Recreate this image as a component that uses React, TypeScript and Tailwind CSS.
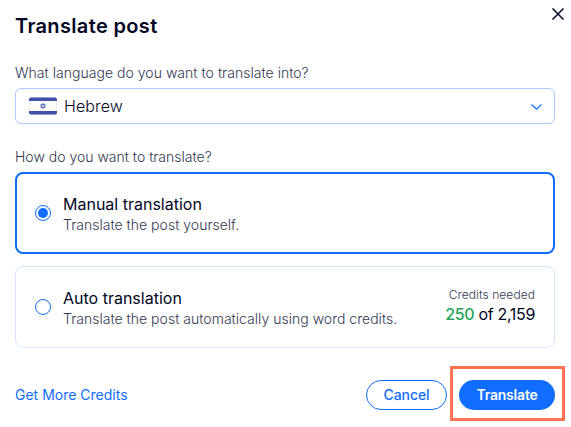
import React, { useState } from 'react';
import clsx from 'clsx';

const options = [
  { id: 'manual', title: 'Manual translation', text: 'Translate the post yourself.' },
  { id: 'auto', title: 'Auto translation', text: 'Translate the post automatically using word credits.' },
];

const IsraelFlag = () => (
  <svg width="28" height="18" viewBox="0 0 28 18" fill="none">
    <rect x="0.5" y="0.5" width="27" height="17" rx="2" fill="#fff" stroke="#e9ebf2" />
    <path d="M2 .5h24a2 2 0 0 1 2 2V4H0V2.500a2 2 0 0 1 2-2Z" fill="#414fa8" />
    <path d="M0 14h28v1.500a2 2 0 0 1-2 2H2a2 2 0 0 1-2-2Z" fill="#414fa8" />
    <path d="m14 6.300 2.300 4H11.700Z M14 11.700l-2.300-4h4.600Z" stroke="#4a5db8" strokeWidth="0.8" />
  </svg>
);

const Radio = ({ checked }: { checked: boolean }) => (
  <span className="flex h-4 w-4 shrink-0 items-center justify-center rounded-full border border-[#116dff]">
    {checked && <span className="h-2.5 w-2.5 rounded-full bg-[#116dff]" />}
  </span>
);

const App = () => {
  const [selected, setSelected] = useState('manual');

  return (
    <div className="h-[427px] w-[571px] overflow-hidden bg-white pl-[15px] pr-4 font-['Inter','Open_Sans',sans-serif] text-[#000624]">
      <header className="relative flex h-[63px] pt-[14px]">
        <h1 className="text-[20px] leading-6 font-semibold tracking-[0.35px] whitespace-nowrap">Translate post</h1>
        <button aria-label="Close" className="absolute top-2 -right-[9px]">
          <svg width="12" height="12" viewBox="0 0 12 12" fill="none" stroke="#000624" strokeWidth="1.500">
            <path d="m.5.5 11 11M11.500.5l-11 11" />
          </svg>
        </button>
      </header>

      <label className="flex h-[25px] text-[14px] leading-5 font-light tracking-[0.03px] text-[#333853]">
        <span className="whitespace-nowrap">What language do you want to translate into?</span>
      </label>
      <button className="flex h-9 w-full items-center rounded-md border border-[#a8caff] pr-3 pl-[13px]">
        <IsraelFlag />
        <span className="ml-[7px] text-[16px] font-light tracking-[0.1px] whitespace-nowrap">Hebrew</span>
        <svg className="mt-px ml-auto" width="11" height="6" viewBox="0 0 11 6" fill="none" stroke="#116dff" strokeWidth="1.200">
          <path d="m.5.5 5 4.700 5-4.700" />
        </svg>
      </button>

      <div className="flex h-12 pt-[23px] text-[14px] leading-5 font-light text-[#333853]">
        <span className="whitespace-nowrap">How do you want to translate?</span>
      </div>
      <div className="flex flex-col gap-3">
        {options.map(({ id, title, text }) => (
          <button
            key={id}
            onClick={() => setSelected(id)}
            className={clsx(
              'flex h-[82px] w-full items-center rounded-lg text-left',
              selected === id ? 'border-2 border-[#116dff] px-[18px]' : 'border border-[#d6e6fe] px-[19px]',
            )}
          >
            <Radio checked={selected === id} />
            <span className="ml-3 flex flex-col whitespace-nowrap">
              <span className="text-[16px] leading-6">{title}</span>
              <span className="text-[14px] leading-[18px] font-light tracking-[0.02px] text-[#333853]">{text}</span>
            </span>
            {id === 'auto' && (
              <span className="ml-auto flex flex-col items-end whitespace-nowrap">
                <span className="text-[12px] leading-4 font-light tracking-[0.07px] text-[#333853]">Credits needed</span>
                <span className="-mt-px mb-px text-[16px] leading-6 tracking-[-0.33px]">
                  <span className="font-medium text-[#25a55a]">250</span> of 2,159
                </span>
              </span>
            )}
          </button>
        ))}
      </div>

      <footer className="mt-8 flex h-[30px] items-center text-[14px]">
        <a href="#credits" className="mb-0.5 whitespace-nowrap text-[#116dff]">Get More Credits</a>
        <button className="ml-auto h-[30px] w-[81px] rounded-full border border-[#116dff] pb-px font-medium tracking-[-0.1px] text-[#116dff]">
          Cancel
        </button>
        <div className="relative ml-3">
          <button className="h-[30px] w-24 rounded-full bg-[#116dff] pb-px font-semibold tracking-[-0.2px] text-white">Translate</button>
          <span className="pointer-events-none absolute -top-[14px] -left-[9px] h-[55px] w-[115px] border-3 border-[#ff7354]" />
        </div>
      </footer>
    </div>
  );
};

export default App;
